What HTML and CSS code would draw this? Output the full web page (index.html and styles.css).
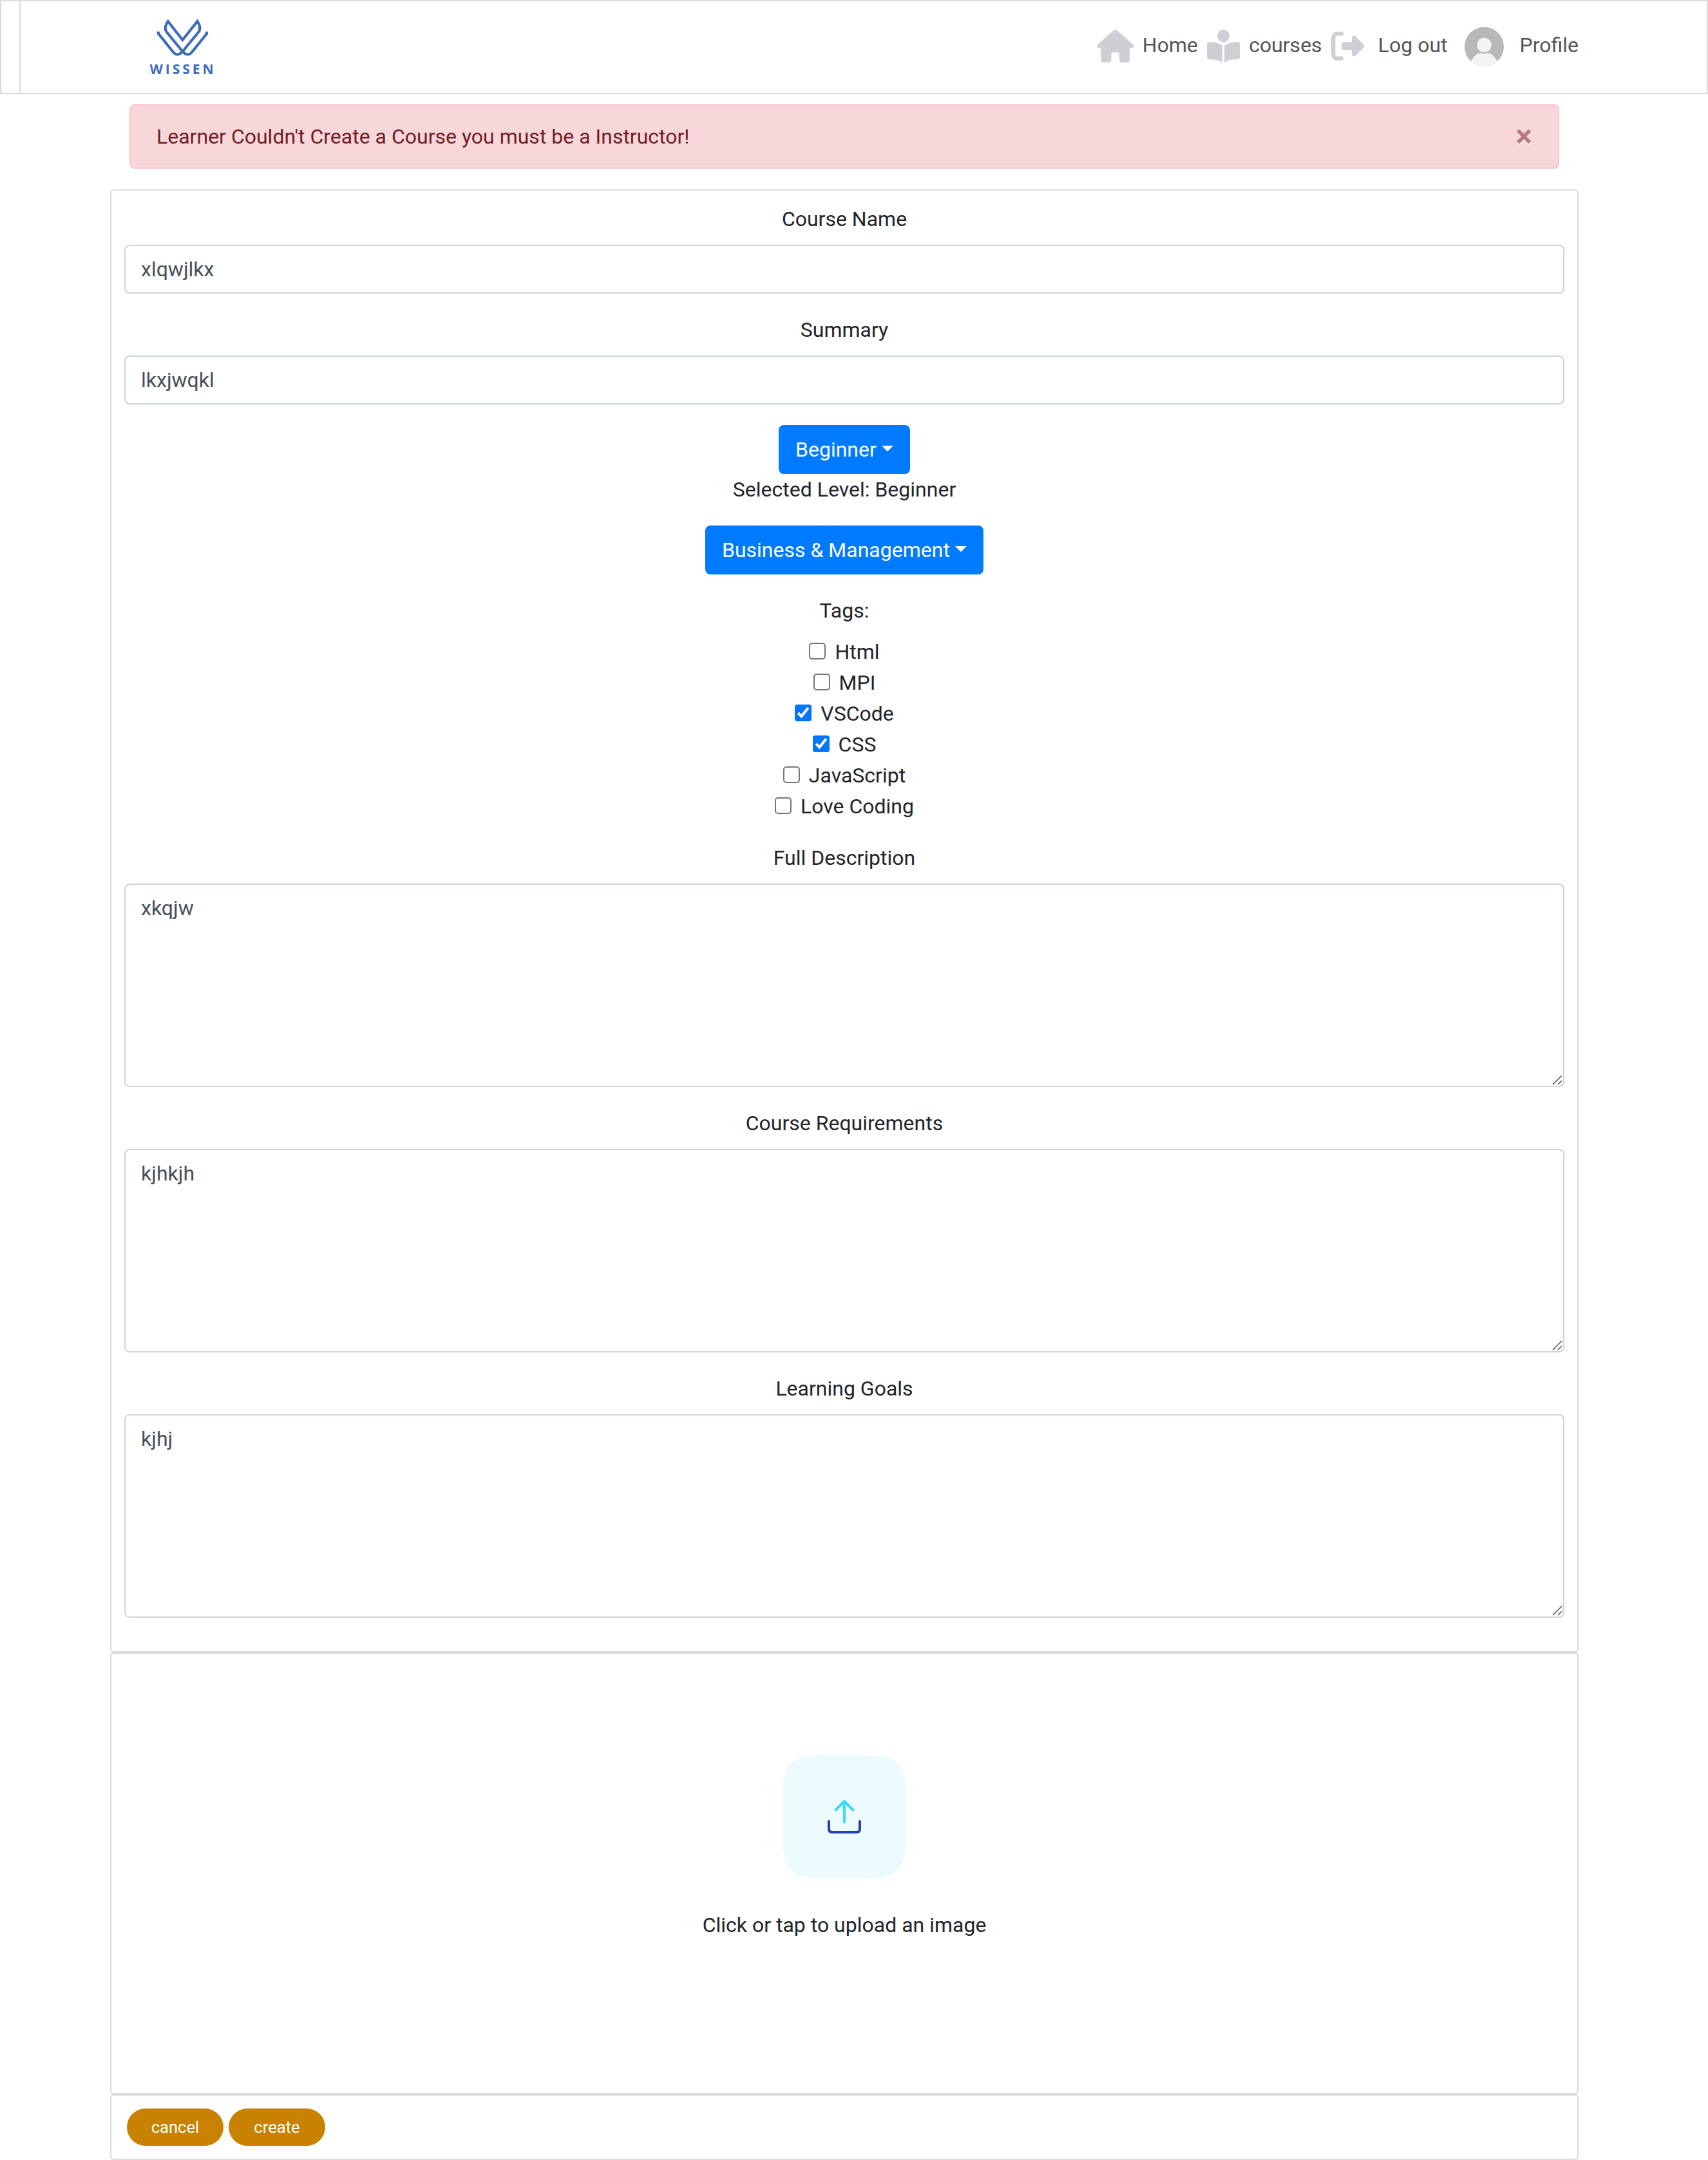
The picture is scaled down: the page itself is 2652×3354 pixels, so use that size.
FILE: index.html
```html
<!DOCTYPE html>
<html lang="en">
<head>
<meta charset="utf-8">
<title>Wissen - Create course</title>
<link rel="stylesheet" href="styles.css">
</head>
<body>
<header class="topbar">
  <div class="topbar-inner">
    <a class="logo">
      <svg class="logo-mark" viewBox="726 87 244 177" fill="none" stroke="#3d6cbb" stroke-width="12.500"><path d="M735 147V157L805 244Q813 254 824 254Q836 254 848 240L774 150Q758 130 780 99L848 186L917 99Q938 130 922 150L848 240Q860 254 872 254Q883 254 891 244L961 157V147"/></svg>
      <span class="logo-text">WISSEN</span>
    </a>
    <nav class="menu">
      <a class="menu-item home"><svg class="icon icon-wide" viewBox="0 0 576 512"><path d="M575.8 255.5c0 18-15 32.1-32 32.1h-32l.7 160.2c0 2.7-.2 5.4-.5 8.1V472c0 22.1-17.9 40-40 40H456c-1.1 0-2.2 0-3.3-.1c-1.4 .1-2.8 .1-4.2 .1H416 392c-22.1 0-40-17.9-40-40V448 384c0-17.7-14.3-32-32-32H256c-17.7 0-32 14.3-32 32v64 24c0 22.1-17.9 40-40 40H160 128.1c-1.5 0-3-.1-4.5-.2c-1.2 .1-2.4 .2-3.6 .2H104c-22.1 0-40-17.9-40-40V360c0-.9 0-1.9 .1-2.8V287.6H32c-18 0-32-14-32-32.1c0-9 3-17 10-24L266.4 8c7-7 15-8 22-8s15 2 21 7L564.8 231.5c8 7 12 15 11 24z"/></svg><span>Home</span></a>
      <a class="menu-item courses"><svg class="icon" viewBox="0 0 512 512"><path d="M160 96a96 96 0 1 1 192 0A96 96 0 1 1 160 96zm80 152V512l-48.4-24.2c-20.9-10.4-43.5-17-66.8-19.3l-96-9.6C12.5 457.2 0 443.5 0 427V224c0-17.7 14.3-32 32-32H62.3c63.6 0 125.6 19.6 177.7 56zm32 264V248c52.1-36.4 114.1-56 177.7-56H480c17.7 0 32 14.3 32 32V427c0 16.4-12.5 30.2-28.8 31.8l-96 9.6c-23.2 2.3-45.9 8.9-66.8 19.3L272 512z"/></svg><span>courses</span></a>
      <a class="menu-item logout"><svg class="icon" viewBox="0 0 512 512"><path d="M377.9 105.9L500.7 228.7c7.2 7.2 11.3 17.1 11.3 27.3s-4.1 20.1-11.3 27.3L377.9 406.1c-6.4 6.4-15 9.9-24 9.9c-18.7 0-33.9-15.2-33.9-33.9l0-62.1-128 0c-17.7 0-32-14.3-32-32l0-64c0-17.7 14.3-32 32-32l128 0 0-62.1c0-18.7 15.2-33.9 33.9-33.9c9 0 17.6 3.6 24 9.9zM160 96L96 96c-17.7 0-32 14.3-32 32l0 256c0 17.7 14.3 32 32 32l64 0c17.7 0 32 14.3 32 32s-14.3 32-32 32l-64 0c-53 0-96-43-96-96L0 128C0 75 43 32 96 32l64 0c17.7 0 32 14.3 32 32s-14.3 32-32 32z"/></svg><span>Log out</span></a>
      <a class="menu-item profile"><svg class="avatar" viewBox="0 0 61 61"><clipPath id="round"><circle cx="30.5" cy="30.5" r="30.5"/></clipPath><g clip-path="url(#round)"><rect width="61" height="61" fill="#b8b8b8"/><circle cx="30.5" cy="28" r="11.2" fill="#f4f4f4"/><path d="M9 56C13 46 18 41.500 25 40.200Q30.500 43 36 40.200C43 41.500 48 46 52 56V61H9z" fill="#f4f4f4"/></g></svg><span>Profile</span></a>
    </nav>
  </div>
</header>

<main class="page">
  <div class="alert">
    <span>Learner Couldn't Create a Course you must be a Instructor!</span>
    <span class="alert-close">×</span>
  </div>

  <section class="card form">
    <div class="group"><label class="label">Course Name</label><input class="control" type="text" value="xlqwjlkx"></div>
    <div class="group"><label class="label">Summary</label><input class="control" type="text" value="lkxjwqkl"></div>
    <div class="group"><button class="dropdown">Beginner</button><div>Selected Level: Beginner</div></div>
    <div class="group"><button class="dropdown">Business &amp; Management</button></div>
    <div class="group">
      <div class="label">Tags:</div>
      <label class="tag"><input type="checkbox">Html</label>
      <label class="tag"><input type="checkbox">MPI</label>
      <label class="tag"><input type="checkbox" checked>VSCode</label>
      <label class="tag"><input type="checkbox" checked>CSS</label>
      <label class="tag"><input type="checkbox">JavaScript</label>
      <label class="tag"><input type="checkbox">Love Coding</label>
    </div>
    <div class="group"><label class="label">Full Description</label>
      <div class="area"><textarea class="control" rows="6">xkqjw</textarea><svg class="grip" viewBox="0 0 16 16"><path d="M1 15L15 1M9 15L15 9"/></svg></div></div>
    <div class="group"><label class="label">Course Requirements</label>
      <div class="area"><textarea class="control" rows="6">kjhkjh</textarea><svg class="grip" viewBox="0 0 16 16"><path d="M1 15L15 1M9 15L15 9"/></svg></div></div>
    <div class="group"><label class="label">Learning Goals</label>
      <div class="area"><textarea class="control" rows="6">kjhj</textarea><svg class="grip" viewBox="0 0 16 16"><path d="M1 15L15 1M9 15L15 9"/></svg></div></div>
  </section>

  <section class="card upload">
    <svg class="upload-icon" viewBox="0 0 192 192" fill="none" stroke-width="4">
      <path fill="#edfbff" d="M0 62C0 14 14 0 62 0H130C178 0 192 14 192 62V130C192 178 178 192 130 192H62C14 192 0 178 0 130z"/>
      <path stroke="#33dcff" stroke-linecap="round" stroke-linejoin="round" d="M96 72V104.500M82.500 85.500L96 72L109.500 85.500"/>
      <path stroke="#2340b2" d="M72 101.500V115Q72 120 77 120H115Q120 120 120 115V101.500"/>
    </svg>
    <span>Click or tap to upload an image</span>
  </section>

  <section class="card actions">
    <button class="pill">cancel</button>
    <button class="pill">create</button>
  </section>
</main>
</body>
</html>
```
FILE: styles.css
```css
* { box-sizing: border-box; }
body {
  margin: 0;
  background: #fff;
  color: #212529;
  font: 32px/48px Roboto, sans-serif;
}
button, input, textarea { font: inherit; margin: 0; }

.topbar {
  height: 146px;
  padding-left: 28px;
  border: 2px solid #dadae0;
}
.topbar-inner {
  height: 142px;
  display: flex;
  justify-content: space-between;
  border-left: 2px solid #dadae0;
  padding: 0 199px 0 200px;
}
.logo {
  display: flex;
  flex-direction: column;
  align-items: center;
  width: 102px;
  padding-top: 27px;
}
.logo-mark { display: block; width: 81px; height: 59px; }
.logo-text {
  margin-top: 6px;
  font: 700 21px/26px "Open Sans", sans-serif;
  letter-spacing: 4px;
  margin-right: -2px;
  color: #3d6cbb;
}

.menu { display: flex; padding-top: 44px; color: #555; }
.menu-item { display: flex; align-items: flex-start; }
.icon { width: 51.200px; height: 51.200px; fill: #cfced4; }
.icon-wide { width: 57.600px; }
.home { gap: 13px; margin-right: 14px; }
.courses { gap: 14px; margin-right: 14.500px; }
.logout { gap: 21.500px; margin-right: 26px; }
.profile { gap: 25px; }
.avatar { width: 61px; height: 61px; margin-top: -4px; }

.page { width: 2280px; margin: 16px 0 0 171px; }
.alert {
  display: flex;
  justify-content: space-between;
  margin: 0 30px 32px;
  padding: 24px 40px;
  height: 100px;
  border: 2px solid #f5c6cb;
  border-radius: 8px;
  background: #f8d7da;
  color: #721c24;
}
.alert-close {
  font-size: 48px;
  font-weight: 700;
  color: #721c24;
  text-shadow: 0 2px 0 #fff;
  opacity: .5;
}

.card {
  border: 2px solid #dadae0;
  border-radius: 5px;
  padding: 20px;
}
.form { text-align: center; }
.group { margin-bottom: 32px; }
.label { display: block; margin-bottom: 16px; }
.control {
  display: block;
  width: 100%;
  padding: 12px 24px;
  border: 2px solid #ced4da;
  border-radius: 8px;
  background: #fff;
  color: #495057;
  resize: none;
}
input.control { height: 76px; }
textarea.control { height: 316px; }
.area { position: relative; }
.grip {
  position: absolute;
  right: 3px;
  bottom: 3px;
  width: 16px;
  height: 16px;
  fill: none;
  stroke: #555;
  stroke-width: 1.500;
}
.dropdown {
  display: block;
  margin: 0 auto;
  height: 76px;
  padding: 12px 24px;
  border: 2px solid #007bff;
  border-radius: 8px;
  background: #007bff;
  color: #fff;
}
.dropdown::after {
  content: "";
  display: inline-block;
  margin-left: 8.160px;
  vertical-align: 8.160px;
  border: 9.600px solid transparent;
  border-top-color: #fff;
  border-bottom: 0;
}
.tag { display: flex; justify-content: center; height: 48px; gap: 14px; }
.tag input { zoom: 2; width: 13px; height: 13px; margin: 5px 0 0; }

.upload {
  height: 686px;
  padding-top: 157px;
  display: flex;
  flex-direction: column;
  align-items: center;
  gap: 48px;
}
.upload-icon { width: 192px; height: 192px; }
.actions { display: flex; gap: 8px; height: 102px; padding-left: 24px; }
.pill {
  width: 150px;
  height: 58px;
  padding: 0;
  border: 0;
  border-radius: 29px;
  background: #c88200;
  color: #fff;
  font-size: 25.600px;
}
```
